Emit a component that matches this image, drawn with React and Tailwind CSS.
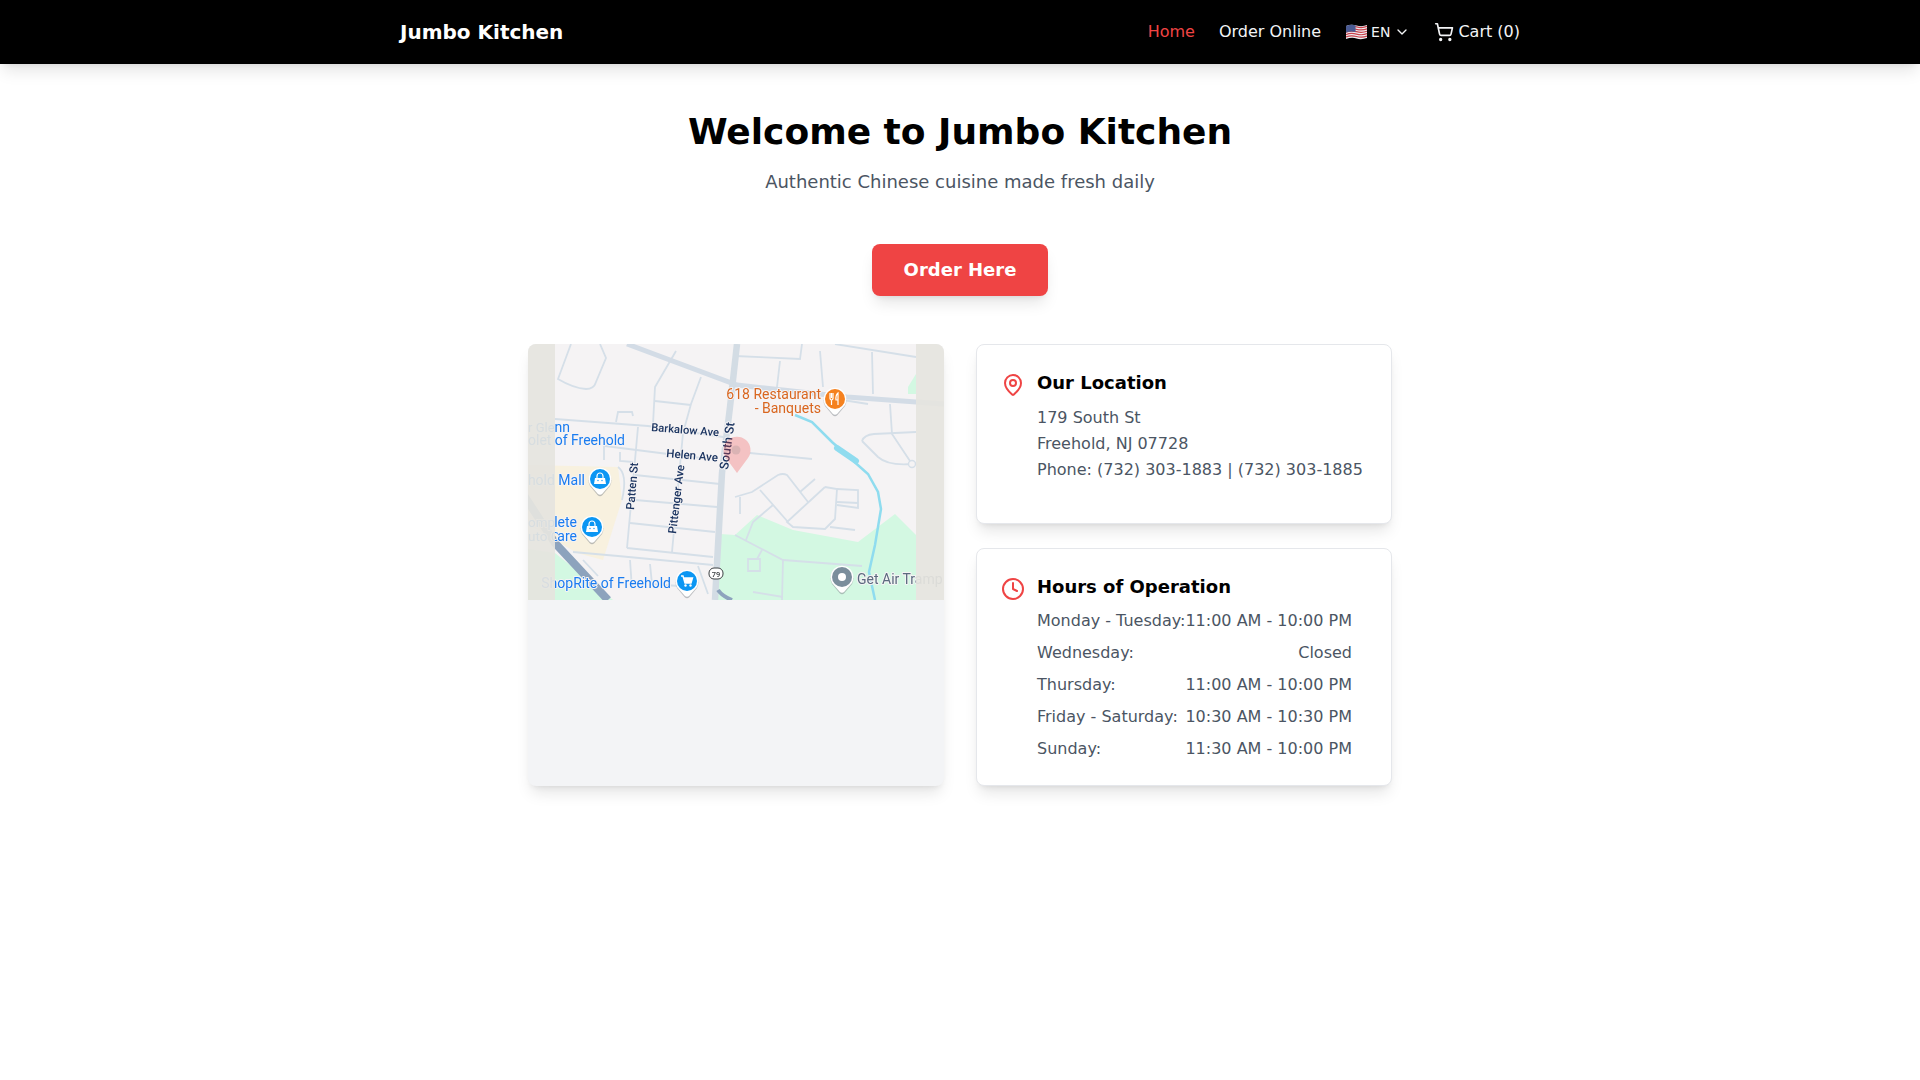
import React from "react";
import { ChevronDown, Clock, MapPin, ShoppingCart } from "lucide-react";

const hours = [
  { day: "Monday - Tuesday:", time: "11:00 AM - 10:00 PM" },
  { day: "Wednesday:", time: "Closed" },
  { day: "Thursday:", time: "11:00 AM - 10:00 PM" },
  { day: "Friday - Saturday:", time: "10:30 AM - 10:30 PM" },
  { day: "Sunday:", time: "11:30 AM - 10:00 PM" },
];

// thin residential streets, map coordinates
const streets = [
  "M27 75 L120 82 L195 93",
  "M77 102 L140 110 L190 116",
  "M222 109 L284 115",
  "M110 83 L99 204",
  "M155 89 L144 208",
  "M155 89 L163 60 L173 33",
  "M125 80 L127 43 L148 7",
  "M127 57 L163 61",
  "M107 131 L192 140",
  "M107 156 L189 163",
  "M102 179 L187 188",
  "M99 204 L185 213",
  "M207 12 L272 15 L274 0",
  "M252 17 L249 43",
  "M292 7 L295 43",
  "M307 0 L388 13",
  "M344 8 L345 50",
  "M362 60 L364 90 L384 120",
  "M334 97 Q336 91 346 90 L388 88",
  "M334 97 L350 113 Q360 122 384 120",
  "M207 153 L224 148 L250 131 Q255 129 259 131 L280 158",
  "M232 146 L260 178",
  "M245 161 L225 178 L218 196",
  "M297 143 L259 178 L265 183 L297 185 L307 175 L309 145 L297 143",
  "M309 145 L330 146 L330 164 L309 161",
  "M309 158 L330 159",
  "M302 183 L327 186",
  "M287 135 L272 148",
  "M212 153 L212 170",
  "M207 191 L255 216 L334 222",
  "M255 216 L254 256",
  "M234 206 L229 215",
  "M220 215 L232 215 L232 227 L220 227 Z",
  "M225 248 L255 253",
  "M43 0 L30 35 Q45 44 58 45 Q66 45 68 38 L78 14 L72 0",
  "M88 78 L90 68 L104 68 L105 72",
  "M76 102 L76 116",
  "M92 108 L92 117 L105 118",
  "M45 208 L90 212 L185 221",
  "M55 216 L70 232",
  "M102 216 L104 245",
  "M122 220 L124 240 L150 242",
  "M170 222 L180 250",
  "M94 156 Q100 130 90 123",
  "M302 54 L340 60",
];

const MapPoi = ({ x, y, color, children }) => (
  <g transform={`translate(${x} ${y})`}>
    <path d="M-10 6 A11.5 11.5 0 1 1 10 6 L2.5 15 Q0 17.5 -2.5 15 Z" fill="#80868b" opacity="0.5" transform="translate(0 1)" />
    <path d="M-10 6 A11.5 11.5 0 1 1 10 6 L2.5 14.5 Q0 17 -2.5 14.5 Z" fill="#ffffff" />
    <circle r="10" fill={color} />
    {children}
  </g>
);

const BagGlyph = () => (
  <g fill="#ffffff">
    <path d="M-5 -1 H5 L6 5 H-6 Z" />
    <path d="M-3 -1 V-3 A3 3 0 0 1 3 -3 V-1" fill="none" stroke="#ffffff" strokeWidth="1.2" />
    <circle cx="-2" cy="1.5" r="0.7" fill="#0b96f3" />
    <circle cx="2" cy="1.5" r="0.7" fill="#0b96f3" />
  </g>
);

const label = {
  fontFamily: "Roboto, sans-serif",
  paintOrder: "stroke",
  stroke: "#f5f3f4",
  strokeWidth: 2,
  strokeLinejoin: "round",
};

const MapPicture = () => (
  <svg width="416" height="256" viewBox="0 0 416 256" className="block blur-[0.4px]">
    <rect width="416" height="256" fill="#f5f3f4" />

    {/* land use */}
    <path d="M207 191 L229 171 L265 186 L330 198 L367 170 L388 191 V256 H187 L192 190 Z" fill="#d3f8e2" />
    <path d="M0 205 L27 209 L85 256 H0 Z" fill="#d3f8e2" />
    <path d="M380 43 L388 30 V50 H380 Z" fill="#d3f8e2" />
    <path d="M0 121 L90 123 L94 156 L75 216 L49 209 L27 196 L0 180 Z" fill="#f8f1df" />

    {/* streets */}
    {streets.map((d, i) => (
      <path key={i} d={d} fill="none" stroke="#d5dfe8" strokeWidth="1.8" />
    ))}
    <circle cx="384" cy="120" r="3.5" fill="#f5f3f4" stroke="#d5dfe8" strokeWidth="1.4" />

    {/* main roads */}
    <path d="M99 0 L209 41 L319 53 L416 60" fill="none" stroke="#d3dce6" strokeWidth="5" />
    <path d="M209 0 L202 63 L194 129 L187 256" fill="none" stroke="#d3dce4" strokeWidth="6.5" />
    <path d="M-5 150 L27 199 L80 256" fill="none" stroke="#8da3bd" strokeWidth="8" />
    <path d="M190 246 Q194 252 204 256" fill="none" stroke="#8da3bd" strokeWidth="4" />

    {/* river */}
    <path d="M267 71 L284 78 L304 98 L340 130 L350 148 L353 165 L347 201 L341 228 L347 256" fill="none" stroke="#8fdcef" strokeWidth="2.5" />
    <path d="M309 104 L328 117" fill="none" stroke="#8fdcef" strokeWidth="6" strokeLinecap="round" />

    {/* street names */}
    <g fill="#1c3561" fontSize="11.5" fontWeight="500" style={label}>
      <text transform="translate(123 87) rotate(4.5)" fontSize="11.2">Barkalow Ave</text>
      <text transform="translate(138 113) rotate(5)">Helen Ave</text>
      <text transform="translate(106 166) rotate(-85)">Patten St</text>
      <text transform="translate(148 190) rotate(-83)">Pittenger Ave</text>
      <text transform="translate(200 126) rotate(-82)" fontSize="12.5">South St</text>
    </g>

    {/* blue labels */}
    <g fill="#1a7cf0" fontSize="14" style={label}>
      <text x="0" y="88" fontSize="13">r Gle</text>
      <text x="42" y="88" textAnchor="end">nn</text>
      <text x="0" y="101">olet</text>
      <text x="97" y="101" textAnchor="end">of Freehold</text>
      <text x="57" y="141" textAnchor="end">hold Mall</text>
      <text x="0" y="183" fontSize="13.5">omp</text>
      <text x="49" y="183" textAnchor="end">lete</text>
      <text x="0" y="197" fontSize="13.5">uto C</text>
      <text x="49" y="197" textAnchor="end">are</text>
      <text x="143" y="244" textAnchor="end">ShopRite of Freehold</text>
    </g>
    <g fill="#d9661f" fontSize="14" textAnchor="end" style={label}>
      <text x="293" y="55">618 Restaurant</text>
      <text x="293" y="69">- Banquets</text>
    </g>
    <text x="329" y="240" fill="#5b6b7f" fontSize="14" style={label}>Get Air Tramp</text>

    {/* pins */}
    <MapPoi x={307} y={55} color="#f5811f">
      <path d="M-5 -6 V-1 Q-5 1 -3.5 1 V6 M-3.5 -6 V-1 M-2 -6 V-1 Q-2 1 -3.5 1 M3 6 V-6 Q0.5 -4 1 1 H3" fill="none" stroke="#ffffff" strokeWidth="1.2" />
    </MapPoi>
    <MapPoi x={72} y={135} color="#0b96f3"><BagGlyph /></MapPoi>
    <MapPoi x={64} y={183} color="#0b96f3"><BagGlyph /></MapPoi>
    <MapPoi x={159} y={237} color="#0b96f3">
      <path d="M-6 -5 H-4 L-2 2 H4 L5.5 -3 H-3.5" fill="none" stroke="#ffffff" strokeWidth="1.4" />
      <path d="M-3.2 -3 H5.5 L4 2 H-2 Z" fill="#ffffff" />
      <circle cx="-1.5" cy="4.5" r="1.2" fill="#ffffff" />
      <circle cx="3.5" cy="4.5" r="1.2" fill="#ffffff" />
    </MapPoi>
    <MapPoi x={314} y={233} color="#7b8e9c">
      <circle r="4" fill="#ffffff" />
    </MapPoi>

    {/* route shield */}
    <rect x="181" y="224" width="14" height="11" rx="5" fill="#ffffff" stroke="#3c4043" strokeWidth="1" />
    <text x="188" y="232.5" fontSize="7.5" fontWeight="500" fill="#3c4043" textAnchor="middle" fontFamily="Roboto, sans-serif">79</text>

    {/* grey side tiles */}
    <rect width="27" height="256" fill="#e5e4df" opacity="0.93" />
    <rect x="388" width="28" height="256" fill="#e5e4df" opacity="0.93" />

    {/* marker */}
    <path d="M209 129 L198 114 A13.5 13.5 0 1 1 220 114 Z" fill="#ef4444" opacity="0.28" />
    <circle cx="208" cy="106" r="4.5" fill="#7f7f7f" opacity="0.22" />
  </svg>
);

const UsFlag = () => (
  <svg width="21" height="16" viewBox="0 0 22 16" preserveAspectRatio="none" className="shrink-0">
    <path d="M0 2 Q5 0 11 1.5 T22 1 V14 Q16 16 11 14.5 T0 15 Z" fill="#eef0f4" />
    <g fill="none" stroke="#c8404a" strokeWidth="1.2">
      <path d="M0 3.4 Q5 1.4 11 2.9 T22 2.4" />
      <path d="M0 5.8 Q5 3.8 11 5.3 T22 4.8" />
      <path d="M0 8.2 Q5 6.2 11 7.7 T22 7.2" />
      <path d="M0 10.6 Q5 8.6 11 10.1 T22 9.6" />
      <path d="M0 13 Q5 11 11 12.5 T22 12" />
    </g>
    <path d="M0 2 Q5 0 10 1.2 V8 Q5 6.6 0 8.4 Z" fill="#4a5a92" />
  </svg>
);

export default function App() {
  return (
    <div className="min-h-screen bg-white font-['DejaVu_Sans',sans-serif]">
      {/* Navbar */}
      <nav className="bg-black shadow-lg">
        <div className="max-w-6xl mx-auto px-4 h-16 flex items-center justify-between">
          <span className="text-xl font-bold text-white">Jumbo Kitchen</span>
          <div className="flex items-center gap-6 text-white">
            <a className="text-[#ef4444]">Home</a>
            <a className="text-gray-100">Order Online</a>
            <div className="flex items-center gap-1 text-sm text-gray-100 pl-px">
              <UsFlag />
              <span>EN</span>
              <ChevronDown className="w-4 h-4" />
            </div>
            <div className="flex items-center gap-1 text-gray-100">
              <ShoppingCart className="w-5 h-5" />
              <span>Cart (0)</span>
            </div>
          </div>
        </div>
      </nav>

      <main className="max-w-4xl mx-auto px-4 py-12">
        {/* Hero */}
        <div className="text-center">
          <h1 className="text-4xl font-bold text-black mb-4">Welcome to Jumbo Kitchen</h1>
          <p className="text-lg text-[#4b5563] mb-12">Authentic Chinese cuisine made fresh daily</p>
          <button className="bg-[#ef4444] text-white text-lg font-semibold px-8 py-3 rounded-lg shadow-lg">
            Order Here
          </button>
        </div>

        {/* Map and info */}
        <div className="grid grid-cols-2 gap-8 mt-12">
          <div className="bg-[#f3f4f6] rounded-lg shadow-lg overflow-hidden">
            <MapPicture />
          </div>

          <div className="flex flex-col gap-6">
            <div className="bg-white border border-[#e5e7eb] rounded-lg shadow-lg px-6 pt-6 pb-10 flex gap-3">
              <MapPin className="w-6 h-6 mt-1 shrink-0 text-[#ef4444]" />
              <div>
                <h2 className="text-lg font-semibold text-black mb-2">Our Location</h2>
                <div className="text-[#4b5563] leading-relaxed whitespace-nowrap">
                  <p>179 South St</p>
                  <p>Freehold, NJ 07728</p>
                  <p>Phone: (732) 303-1883 | (732) 303-1885</p>
                </div>
              </div>
            </div>

            <div className="bg-white border border-[#e5e7eb] rounded-lg shadow-lg p-6 flex gap-3">
              <Clock className="w-6 h-6 mt-1 shrink-0 text-[#ef4444]" />
              <div className="flex-1 pr-4">
                <h2 className="text-lg font-semibold text-black">Hours of Operation</h2>
                <div className="mt-2 flex flex-col gap-2 text-[#4b5563]">
                  {hours.map((h) => (
                    <div key={h.day} className="flex justify-between whitespace-nowrap">
                      <span>{h.day}</span>
                      <span>{h.time}</span>
                    </div>
                  ))}
                </div>
              </div>
            </div>
          </div>
        </div>
      </main>
    </div>
  );
}
